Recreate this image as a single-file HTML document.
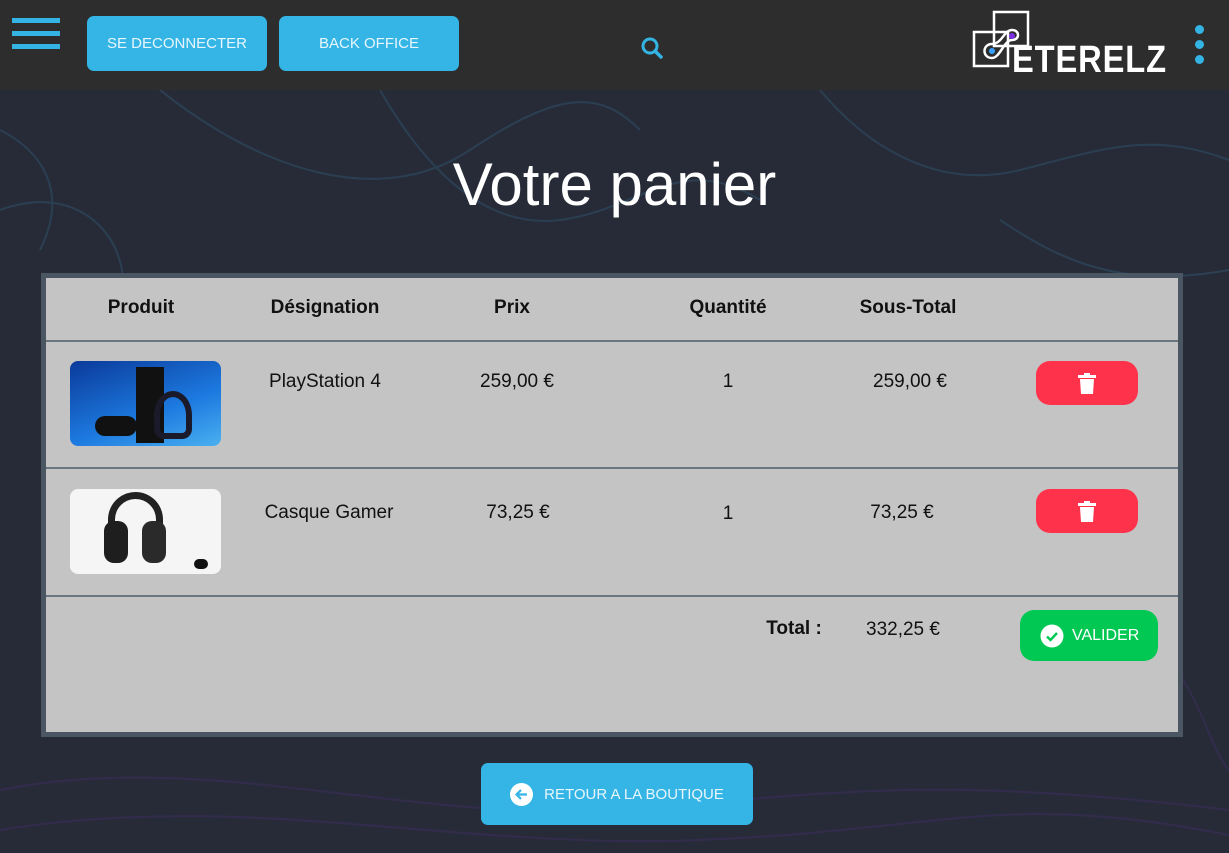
<!DOCTYPE html>
<html><head><meta charset="utf-8"><style>
*{margin:0;padding:0;box-sizing:border-box}
body{width:1229px;height:853px;overflow:hidden;background:#272b37;font-family:"Liberation Sans",sans-serif;position:relative}
.hdr{position:absolute;left:0;top:0;width:1229px;height:90px;background:#2d2d2d}
.burger{position:absolute;left:12px;width:48px;height:5px;background:#34b4e4}
.btn{position:absolute;background:#34b5e5;border-radius:7px;color:#e8f6fc;font-size:15px;display:flex;align-items:center;justify-content:center}
.bg{position:absolute;left:0;top:90px}
h1{position:absolute;left:0;width:1229px;top:150px;text-align:center;color:#fff;font-weight:normal;font-size:60px}
.tbl{position:absolute;left:41px;top:273px;width:1142px;height:464px;border:5px solid #4b5663;background:#c4c4c4}
.line{position:absolute;left:0;width:1132px;height:2px;background:#6a7582}
.t{position:absolute;font-size:19px;color:#111;transform:translateX(-50%);white-space:nowrap}
.b{font-weight:bold}
.del{position:absolute;left:990px;width:102px;height:44px;background:#fe334b;border-radius:14px}
.img{position:absolute;left:24px;width:151px;height:85px;border-radius:8px;overflow:hidden}
</style></head><body>
<svg class="bg" width="1229" height="763" fill="none" stroke-width="2">
<g stroke="#2c4256" opacity=".9">
<path d="M160 0 C260 80 380 120 470 60 S600 0 640 40"/>
<path d="M380 0 C420 70 480 140 560 130 S680 60 760 110"/>
<path d="M0 120 C80 90 140 150 120 230"/>
<path d="M820 0 C870 60 940 100 1020 80 S1150 40 1229 70"/>
<path d="M1000 130 C1060 170 1120 200 1229 180"/>
<path d="M0 40 C40 60 70 100 40 160"/>
</g>
<g stroke="#342c50" opacity=".9">
<path d="M0 700 C200 660 400 730 600 720 S900 680 1229 720"/>
<path d="M0 740 C250 700 450 760 700 750 S1000 700 1229 745"/>
<path d="M1160 560 C1200 600 1210 660 1229 680"/>
</g>
</svg>
<div class="hdr">
<div class="burger" style="top:18px"></div><div class="burger" style="top:31px"></div><div class="burger" style="top:44px"></div>
<div class="btn" style="left:87px;top:16px;width:180px;height:55px">SE DECONNECTER</div>
<div class="btn" style="left:279px;top:16px;width:180px;height:55px">BACK OFFICE</div>
<svg style="position:absolute;left:640px;top:36px" width="24" height="24"><circle cx="10" cy="10" r="7" stroke="#34b4e4" stroke-width="3" fill="none"/><path d="M15 15 L21 21" stroke="#34b4e4" stroke-width="3.5" stroke-linecap="round"/></svg>
<svg style="position:absolute;left:972px;top:10px" width="60" height="62" fill="none" stroke="#fff" stroke-width="2.5">
<rect x="2" y="22" width="34" height="34"/><rect x="22" y="2" width="34" height="34"/>
<path d="M20 48 C10 48 10 34 20 34 C30 34 32 20 40 20 C48 20 48 30 40 30 C32 30 28 48 20 48Z"/>
<circle cx="20" cy="41" r="3" fill="#3aa0ff" stroke="none"/><circle cx="40" cy="26" r="3" fill="#7b2fe0" stroke="none"/>
</svg>
<div style="position:absolute;left:1012px;top:40px;color:#fff;font-weight:bold;font-size:38px;letter-spacing:1px;transform-origin:left top;transform:scaleX(0.86);line-height:40px">ETERELZ</div>
<div style="position:absolute;left:1195px;top:25px;width:9px;height:9px;border-radius:50%;background:#34b4e4"></div>
<div style="position:absolute;left:1195px;top:40px;width:9px;height:9px;border-radius:50%;background:#34b4e4"></div>
<div style="position:absolute;left:1195px;top:55px;width:9px;height:9px;border-radius:50%;background:#34b4e4"></div>
</div>
<h1>Votre panier</h1>
<div class="tbl">
<div class="line" style="top:62px"></div><div class="line" style="top:189px"></div><div class="line" style="top:317px"></div>
<div class="t b" style="left:95px;top:19px">Produit</div>
<div class="t b" style="left:279px;top:19px">Désignation</div>
<div class="t b" style="left:466px;top:19px">Prix</div>
<div class="t b" style="left:682px;top:19px">Quantité</div>
<div class="t b" style="left:862px;top:19px">Sous-Total</div>
<div class="img" style="top:83px;background:linear-gradient(160deg,#0a3a9a,#1d7ae0 60%,#4ab0f0)">
<div style="position:absolute;left:66px;top:6px;width:28px;height:76px;background:#111"></div>
<div style="position:absolute;left:84px;top:30px;width:38px;height:48px;border:6px solid #1a1a2a;border-radius:50% 50% 10px 10px"></div>
<div style="position:absolute;left:25px;top:55px;width:42px;height:20px;background:#111;border-radius:10px"></div>
</div>
<div class="t" style="left:279px;top:93px">PlayStation 4</div>
<div class="t" style="left:471px;top:93px">259,00 €</div>
<div class="t" style="left:682px;top:93px">1</div>
<div class="t" style="left:864px;top:93px">259,00 €</div>
<div class="del" style="top:83px"></div>
<div class="img" style="top:211px;background:#f5f5f5">
<div style="position:absolute;left:38px;top:3px;width:55px;height:60px;border:7px solid #222;border-bottom:none;border-radius:30px 30px 0 0"></div>
<div style="position:absolute;left:34px;top:32px;width:24px;height:42px;background:#1e1e1e;border-radius:10px"></div>
<div style="position:absolute;left:72px;top:32px;width:24px;height:42px;background:#2a2a2a;border-radius:10px"></div>
<div style="position:absolute;left:124px;top:70px;width:14px;height:10px;background:#111;border-radius:5px"></div>
</div>
<div class="t" style="left:283px;top:224px">Casque Gamer</div>
<div class="t" style="left:472px;top:224px">73,25 €</div>
<div class="t" style="left:682px;top:225px">1</div>
<div class="t" style="left:856px;top:224px">73,25 €</div>
<div class="del" style="top:211px"></div>
<div class="t b" style="left:748px;top:340px">Total :</div>
<div class="t" style="left:857px;top:341px">332,25 €</div>
<div style="position:absolute;left:974px;top:332px;width:138px;height:51px;background:#00c853;border-radius:14px;color:#fff;font-size:16px;display:flex;align-items:center;padding-left:20px">
<svg width="24" height="24" style="margin-right:8px"><circle cx="12" cy="12" r="11.5" fill="#fff"/><path d="M7 12.5 L10.5 16 L17 9" stroke="#00c853" stroke-width="2.5" fill="none"/></svg>VALIDER</div>
</div>
<svg style="position:absolute;left:1078px;top:373px" width="18" height="22"><rect x="0" y="2" width="18" height="3" fill="#fff"/><rect x="6" y="0" width="6" height="3" fill="#fff"/><path d="M2 6 H16 L15 21 H3 Z" fill="#fff"/></svg>
<svg style="position:absolute;left:1078px;top:501px" width="18" height="22"><rect x="0" y="2" width="18" height="3" fill="#fff"/><rect x="6" y="0" width="6" height="3" fill="#fff"/><path d="M2 6 H16 L15 21 H3 Z" fill="#fff"/></svg>
<div class="btn" style="left:481px;top:763px;width:272px;height:62px;font-size:15px">
<svg width="23" height="23" style="margin-right:11px"><circle cx="11.5" cy="11.5" r="11.5" fill="#fff"/><path d="M17 11.5 H7 M11 7 L6.5 11.5 L11 16" stroke="#34b5e5" stroke-width="2.2" fill="none"/></svg>RETOUR A LA BOUTIQUE</div>
</body></html>
